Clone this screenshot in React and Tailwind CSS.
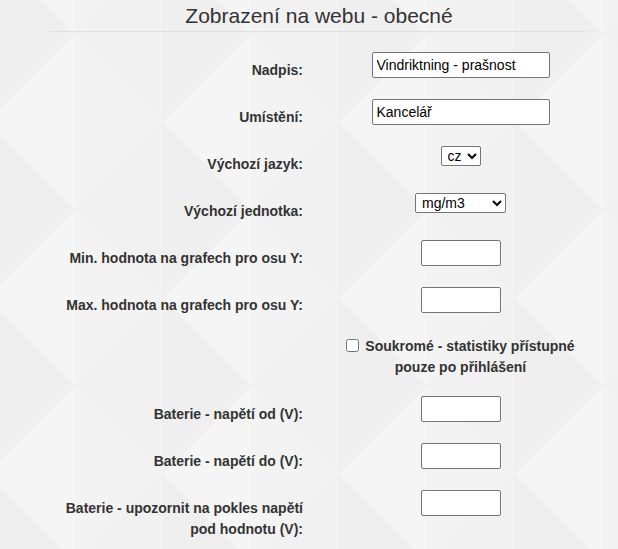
import React from 'react';

const font = { fontFamily: '"Liberation Sans", Arial, sans-serif' };

function Background() {
  // jemný kosočtvercový vzor na pozadí
  return (
    <svg className="absolute inset-0 w-full h-full" xmlns="http://www.w3.org/2000/svg">
      <defs>
        <pattern id="diamonds" x="-13" y="34" width="176" height="176" patternUnits="userSpaceOnUse">
          <rect width="176" height="176" fill="#f0f0f0" />
          <polygon points="0,0 88,0 0,88" fill="#efefef" />
          <polygon points="0,176 0,88 88,176" fill="#efefef" />
          <polygon points="176,0 176,88 88,0" fill="#f1f1f1" />
          <polygon points="176,176 88,176 176,88" fill="#f1f1f1" />
          <polygon points="88,0 88,176 0,88" fill="#f5f5f5" />
          <polygon points="88,0 176,88 88,176" fill="#f3f3f3" />
        </pattern>
      </defs>
      <rect width="100%" height="100%" fill="url(#diamonds)" />
    </svg>
  );
}

function Label({ children }) {
  return (
    <div className="w-[254px] shrink-0 text-right pt-[8px] leading-[21px] text-[14px] font-bold text-[#333]">
      {children}
    </div>
  );
}

function TextRow({ label, value, wide }) {
  return (
    <div className="flex items-start gap-[29px]">
      <Label>{label}</Label>
      <div className="flex-1 flex justify-center">
        <input
          type="text"
          defaultValue={value}
          className={`${wide ? 'w-[178px]' : 'w-[80px]'} h-[26px] bg-white border border-[#767676] rounded-[2px] px-[4px] text-[14px] text-black outline-none`}
        />
      </div>
    </div>
  );
}

function SelectRow({ label, value, options, width }) {
  return (
    <div className="flex items-start gap-[29px]">
      <Label>{label}</Label>
      <div className="flex-1 flex justify-center">
        <select
          defaultValue={value}
          className={`${width} h-[20px] bg-white border border-[#767676] rounded-[2px] pl-[2px] text-[14px] text-black`}
        >
          {options.map((o) => (
            <option key={o}>{o}</option>
          ))}
        </select>
      </div>
    </div>
  );
}

export default function App() {
  return (
    <div className="relative min-h-screen overflow-hidden bg-[#f0f0f0]" style={font}>
      <Background />
      <div className="relative ml-[49px] w-[540px]">
        <h2 className="text-center text-[21px] leading-[31px] font-normal text-[#333] border-b border-[#e3e3e3]">
          Zobrazení na webu - obecné
        </h2>

        <div className="mt-[20px] flex flex-col gap-[18px]">
          <TextRow label="Nadpis:" value="Vindriktning - prašnost" wide />
          <TextRow label="Umístění:" value="Kancelář" wide />
          <SelectRow label="Výchozí jazyk:" value="cz" options={['cz', 'en']} width="w-[40px]" />
          <SelectRow label="Výchozí jednotka:" value="mg/m3" options={['mg/m3', 'µg/m3']} width="w-[91px]" />
          <TextRow label="Min. hodnota na grafech pro osu Y:" value="" />
          <TextRow label="Max. hodnota na grafech pro osu Y:" value="" />

          <div className="flex items-start gap-[29px]">
            <div className="w-[254px] shrink-0" />
            <div className="flex-1 text-center pt-[2px] leading-[21px] text-[14px] font-bold text-[#333]">
              <label>
                <input type="checkbox" className="m-0 mr-[6px] w-[13px] h-[13px] align-[-1px]" />
                Soukromé - statistiky přístupné
                <br />
                pouze po přihlášení
              </label>
            </div>
          </div>

          <TextRow label="Baterie - napětí od (V):" value="" />
          <TextRow label="Baterie - napětí do (V):" value="" />
          <TextRow label="Baterie - upozornit na pokles napětí pod hodnotu (V):" value="" />
        </div>
      </div>
    </div>
  );
}
